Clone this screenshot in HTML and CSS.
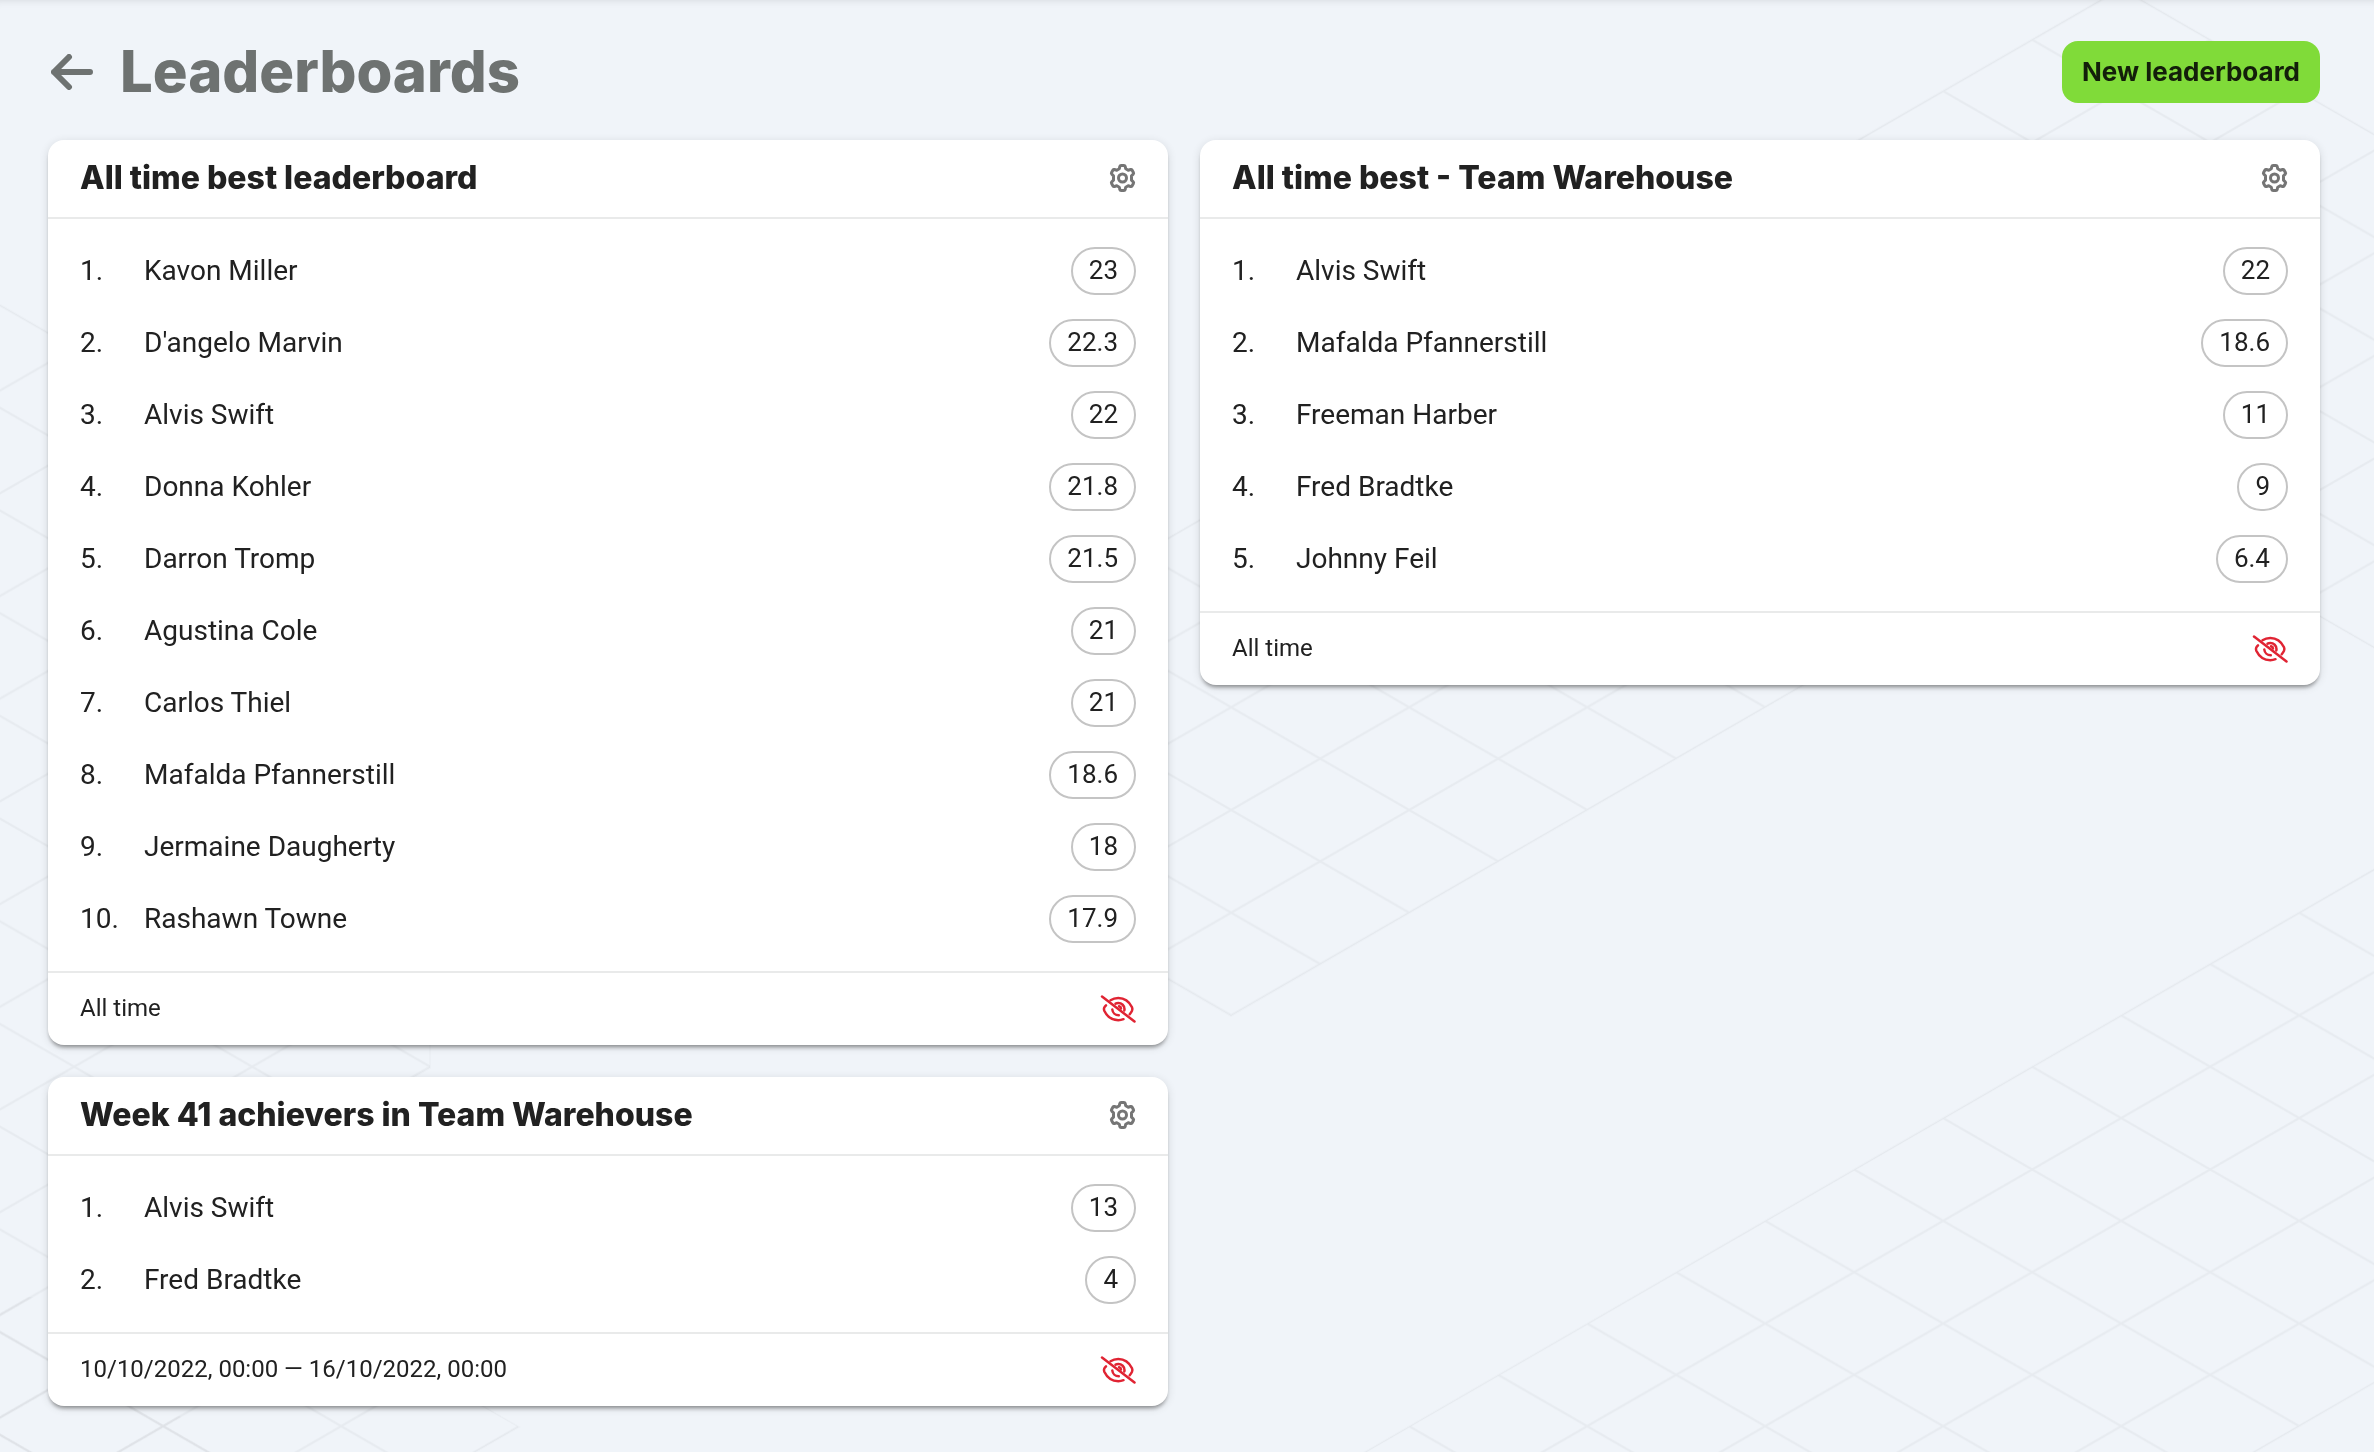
FILE: index.html
```html
<!DOCTYPE html>
<html lang="en">
<head>
  <meta charset="UTF-8">
  <meta name="viewport" content="width=device-width, initial-scale=1">
  <title>Leaderboards</title>
  <link rel="stylesheet" href="styles.css">
</head>
<body>

  <!-- Isometric grid behind the page -->
  <svg class="backdrop" viewBox="0 0 2374 1452" preserveAspectRatio="xMinYMin slice" aria-hidden="true">
    <defs>
      <pattern id="iso" width="178" height="102.7" patternUnits="userSpaceOnUse" patternTransform="translate(163.2 91.1)">
        <path d="M0 0L178 102.7M178 0L0 102.7" fill="none" stroke="#000" stroke-opacity="0.035" stroke-width="2"/>
      </pattern>
    </defs>
    <g fill="url(#iso)" stroke="#000" stroke-opacity="0.015" stroke-width="2">
      <polygon points="-15,296 430,553 430,1068 341,1119 341,1324 519,1427 430,1478 -15,1478"/>
      <polygon points="965,655 2121,-12 2388,142 2388,656 2121,502 1231,1016 965,862"/>
      <polygon points="1320,1478 2388,861 2388,1375 2210,1478"/>
    </g>
    <polygon fill="url(#iso)" points="-15,1290 48,1300 250,1478 -15,1478"/>
  </svg>

  <!-- Icons -->
  <svg class="sprite" aria-hidden="true">
    <symbol id="gear" viewBox="0 0 26 28">
      <path d="M10.3 2.5Q10.6 1.5 11.6 1.5H14.4Q15.4 1.5 15.7 2.5L16.2 4.8L18.7 6.2L21 5.5Q22 5.2 22.5 6.1L23.9 8.6Q24.4 9.5 23.7 10.2L22 11.8V16.2L23.7 17.8Q24.4 18.5 23.9 19.4L22.5 21.9Q22 22.8 21 22.5L18.7 21.8L16.2 23.2L15.7 25.5Q15.4 26.5 14.4 26.5H11.6Q10.6 26.5 10.3 25.5L9.8 23.2L7.3 21.8L5 22.5Q4 22.8 3.5 21.9L2.1 19.4Q1.6 18.5 2.3 17.8L4 16.2V11.8L2.3 10.2Q1.6 9.5 2.1 8.6L3.5 6.1Q4 5.2 5 5.5L7.3 6.2L9.8 4.8Z"/>
      <circle cx="13" cy="14" r="4"/>
    </symbol>
    <symbol id="eye-off" viewBox="0 0 36 28">
      <path d="M2 1.500L34.500 26.500"/>
      <path d="M10.500 5.200C13 3.500 15.300 2.900 18.300 2.900C24.800 2.900 29.500 7 32 12.200Q32.800 14 32 15.800Q31 17.800 29.700 19.300"/>
      <path d="M6 10.300Q4.800 11.500 4.300 12.500Q3.600 14 4.300 15.800C6.800 21 11.800 25.200 18.300 25.200Q21 25.200 23.500 24.200"/>
      <path d="M15.500 8.600Q16.700 8 18.300 8C21.700 8 24.500 10.600 24.500 14Q24.500 14.800 24.300 15.500"/>
      <path d="M12.300 14.500C12.600 17.700 15.300 20.200 18.800 20.200"/>
      <path d="M19 11.300Q21 12 21 13.500"/>
    </symbol>
  </svg>

  <main class="page">
    <header class="page-header">
      <a class="back" href="#" aria-label="Back">
        <svg viewBox="0 0 42 36"><path d="M39 18H3M18 3L3 18L18 33"/></svg>
      </a>
      <h1>Leaderboards</h1>
      <button class="btn" type="button">New leaderboard</button>
    </header>

    <div class="columns">
      <div class="column">
        <section class="card">
          <header class="card-header">
            <h2>All time best leaderboard</h2>
            <button class="icon-btn" type="button" aria-label="Settings"><svg class="gear"><use href="#gear"/></svg></button>
          </header>
          <ol class="ranking">
            <li><span class="pos">1.</span><span class="name">Kavon Miller</span><span class="score">23</span></li>
            <li><span class="pos">2.</span><span class="name">D'angelo Marvin</span><span class="score">22.3</span></li>
            <li><span class="pos">3.</span><span class="name">Alvis Swift</span><span class="score">22</span></li>
            <li><span class="pos">4.</span><span class="name">Donna Kohler</span><span class="score">21.8</span></li>
            <li><span class="pos">5.</span><span class="name">Darron Tromp</span><span class="score">21.5</span></li>
            <li><span class="pos">6.</span><span class="name">Agustina Cole</span><span class="score">21</span></li>
            <li><span class="pos">7.</span><span class="name">Carlos Thiel</span><span class="score">21</span></li>
            <li><span class="pos">8.</span><span class="name">Mafalda Pfannerstill</span><span class="score">18.6</span></li>
            <li><span class="pos">9.</span><span class="name">Jermaine Daugherty</span><span class="score">18</span></li>
            <li><span class="pos">10.</span><span class="name">Rashawn Towne</span><span class="score">17.9</span></li>
          </ol>
          <footer class="card-footer">
            <span class="period">All time</span>
            <svg class="eye-off"><use href="#eye-off"/></svg>
          </footer>
        </section>

        <section class="card">
          <header class="card-header">
            <h2>Week 41 achievers in Team Warehouse</h2>
            <button class="icon-btn" type="button" aria-label="Settings"><svg class="gear"><use href="#gear"/></svg></button>
          </header>
          <ol class="ranking">
            <li><span class="pos">1.</span><span class="name">Alvis Swift</span><span class="score">13</span></li>
            <li><span class="pos">2.</span><span class="name">Fred Bradtke</span><span class="score">4</span></li>
          </ol>
          <footer class="card-footer">
            <span class="period">10/10/2022, 00:00 — 16/10/2022, 00:00</span>
            <svg class="eye-off"><use href="#eye-off"/></svg>
          </footer>
        </section>
      </div>

      <div class="column">
        <section class="card">
          <header class="card-header">
            <h2>All time best - Team Warehouse</h2>
            <button class="icon-btn" type="button" aria-label="Settings"><svg class="gear"><use href="#gear"/></svg></button>
          </header>
          <ol class="ranking">
            <li><span class="pos">1.</span><span class="name">Alvis Swift</span><span class="score">22</span></li>
            <li><span class="pos">2.</span><span class="name">Mafalda Pfannerstill</span><span class="score">18.6</span></li>
            <li><span class="pos">3.</span><span class="name">Freeman Harber</span><span class="score">11</span></li>
            <li><span class="pos">4.</span><span class="name">Fred Bradtke</span><span class="score">9</span></li>
            <li><span class="pos">5.</span><span class="name">Johnny Feil</span><span class="score">6.4</span></li>
          </ol>
          <footer class="card-footer">
            <span class="period">All time</span>
            <svg class="eye-off"><use href="#eye-off"/></svg>
          </footer>
        </section>
      </div>
    </div>
  </main>

</body>
</html>
```

FILE: styles.css
```css
/* RESET & BASE */
* {
  margin: 0;
  padding: 0;
  box-sizing: border-box;
}
body {
  min-height: 100vh;
  background: #f0f4f9;
  box-shadow: inset 0 8px 8px -8px rgba(0,0,0,0.12);
  color: #212121;
  font-family: Roboto, sans-serif;
  font-size: 28px;
}
button {
  border: 0;
  background: none;
  cursor: pointer;
}
svg {
  display: block;
}

/* BACKDROP */
.backdrop {
  position: fixed;
  top: 0;
  left: 0;
  width: 100%;
  height: 100%;
  z-index: -1;
}
.sprite {
  display: none;
}

/* PAGE HEADER */
.page {
  padding: 32px 54px 46px 48px;
}
.page-header {
  display: flex;
  align-items: center;
  height: 80px;
  margin-bottom: 28px;
}
.back {
  padding: 0 27px 0 3px;
}
.back svg {
  width: 42px;
  height: 36px;
  fill: none;
  stroke: #6e7271;
  stroke-width: 6;
  stroke-linecap: round;
  stroke-linejoin: round;
}
h1 {
  flex: 1;
  padding-bottom: 2px;
  color: #6e7271;
  font: 800 58px/78px Inter, sans-serif;
}
.btn {
  height: 62px;
  padding: 0 20px;
  border-radius: 16px;
  background: #80db39;
  color: #131f0a;
  font: 700 26px/62px Inter, sans-serif;
}

/* CARDS */
.columns {
  display: grid;
  grid-template-columns: 1fr 1fr;
  gap: 32px;
  align-items: start;
}
.column {
  display: grid;
  gap: 32px;
}
.card {
  border-radius: 16px;
  background: #fff;
  box-shadow: 0 4px 4px -2px rgba(0,0,0,0.4), 0 2px 10px rgba(0,0,0,0.12);
}
.card-header {
  display: flex;
  align-items: center;
  justify-content: space-between;
  height: 79px;
  padding: 0 32px 2px;
  border-bottom: 2px solid #e9eaea;
}
h2 {
  font: 800 32px/40px Inter, sans-serif;
}
.gear {
  width: 27px;
  height: 28px;
  fill: none;
  stroke: #757575;
  stroke-width: 3;
  stroke-linejoin: round;
}

/* RANKING */
.ranking {
  padding: 16px 32px;
  list-style: none;
}
.ranking li {
  display: flex;
  align-items: center;
  height: 72px;
}
.pos,
.name,
.period {
  padding-bottom: 2px;
}
.pos {
  width: 64px;
}
.name {
  flex: 1;
}
.score {
  height: 48px;
  padding: 0 16px;
  border: 2px solid #c4c4c4;
  border-radius: 24px;
  font-size: 26px;
  line-height: 42px;
}

/* CARD FOOTER */
.card-footer {
  display: flex;
  align-items: center;
  justify-content: space-between;
  height: 74px;
  padding: 0 32px;
  border-top: 2px solid #e9eaea;
  font-size: 24px;
}
.eye-off {
  width: 36px;
  height: 28px;
  fill: none;
  stroke: #e02433;
  stroke-width: 2.5;
  stroke-linecap: round;
}
```
